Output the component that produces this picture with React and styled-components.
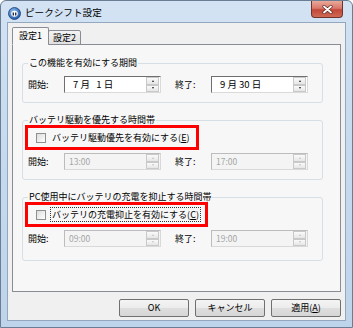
import styled, { createGlobalStyle } from "styled-components";

const GlobalStyle = createGlobalStyle`
  html, body { margin: 0; padding: 0; }
  body {
    width: 353px;
    height: 328px;
    overflow: hidden;
    font-family: "Noto Sans CJK JP", "Liberation Sans", sans-serif;
    font-size: 9px;
    color: #000;
  }
`;

const Window = styled.div`
  width: 353px;
  height: 328px;
  box-sizing: border-box;
  display: flex;
  flex-direction: column;
  border: 1px solid #6a7d92;
  border-radius: 6px 6px 0 0;
  padding: 0 6px 6px;
  background: linear-gradient(180deg, #d3e3f4 0%, #c9dcf0 30%, #bed4eb 100%);
`;

const TitleBar = styled.div`
  height: 21px;
  display: flex;
  align-items: flex-start;
`;

const TitleIcon = styled.div`
  margin: 6px 0 0 1px;
  width: 13px;
  height: 13px;
`;

const TitleText = styled.div`
  margin: 5px 0 0 4px;
  font-size: 9.6px;
  line-height: 13px;
  flex: 1;
`;

const CloseButton = styled.div`
  width: 32px;
  height: 17px;
  margin-right: 3px;
  box-sizing: border-box;
  border: 1px solid #70342c;
  border-top: none;
  border-radius: 0 0 4px 4px;
  background: linear-gradient(180deg, #e9a99b 0%, #d9786a 45%, #c2483a 55%, #cf6a55 100%);
  display: flex;
  align-items: center;
  justify-content: center;
`;

const Client = styled.div`
  flex: 1;
  display: flex;
  flex-direction: column;
  background: #f0f0f0;
  border: 1px solid #93a7bf;
  padding: 4px 4px 3px;
`;

const TabRow = styled.div`
  display: flex;
  align-items: flex-end;
  height: 18px;
  margin-bottom: -1px;
  position: relative;
  z-index: 1;
`;

const Tab = styled.div`
  box-sizing: border-box;
  height: ${(p) => (p.$active ? "18px" : "15px")};
  padding: 0 ${(p) => (p.$active ? "6px" : "4px")};
  display: flex;
  align-items: center;
  border: 1px solid #898c95;
  border-bottom: ${(p) => (p.$active ? "1px solid #f7f7f7" : "1px solid #898c95")};
  margin-left: ${(p) => (p.$active ? "0" : "-1px")};
  border-radius: 2px 2px 0 0;
  background: ${(p) => (p.$active ? "#f7f7f7" : "linear-gradient(180deg, #f3f3f3, #e0e0e0)")};
  line-height: 12px;
`;

const TabPanel = styled.div`
  flex: 1;
  display: flex;
  flex-direction: column;
  gap: 11px;
  background: #f7f7f7;
  border: 1px solid #898c95;
  padding: 12px 17px 0 9px;
`;

const Group = styled.fieldset`
  margin: 0;
  min-width: 0;
  border: 1px solid #d5dfe5;
  border-radius: 3px;
  padding: 0 2px ${(p) => p.$bottom}px;
`;

const Legend = styled.legend`
  padding: 0 1px;
  margin-left: 3px;
  line-height: 12px;
`;

const Highlight = styled.div`
  display: inline-flex;
  align-items: center;
  box-sizing: border-box;
  height: 25px;
  border: 3px solid #f00;
  padding: 0 5px 0 8px;
  gap: 5px;
  margin-top: -1px;
`;

const Check = styled.span`
  width: 10px;
  height: 10px;
  box-sizing: border-box;
  border: 1px solid #8f8f8f;
  background: linear-gradient(135deg, #dcdcdc, #ffffff);
`;

const CheckLabel = styled.span`
  line-height: 13px;
  padding: 0 1px;
  outline: ${(p) => (p.$focus ? "1px dotted #333" : "none")};
`;

const Row = styled.div`
  display: flex;
  align-items: center;
  margin-top: ${(p) => p.$top}px;
`;

const FieldLabel = styled.span`
  width: ${(p) => p.$w}px;
  padding-left: ${(p) => p.$pad}px;
  box-sizing: border-box;
  line-height: 12px;
`;

const Spin = styled.div`
  width: 97px;
  height: 17px;
  box-sizing: border-box;
  display: flex;
  border: 1px solid;
  border-color: ${(p) => (p.$disabled ? "#bcbcbc #d9d9d9 #d9d9d9 #bcbcbc" : "#6f6f6f #dadada #dadada #6f6f6f")};
  background: ${(p) => (p.$disabled ? "#f4f4f4" : "#fff")};
  color: ${(p) => (p.$disabled ? "#a5a5a5" : "#000")};
`;

const SpinText = styled.div`
  flex: 1;
  padding-left: ${(p) => p.$pad}px;
  line-height: 15px;
  white-space: pre;
  font-size: ${(p) => (p.$small ? "8.5px" : "9.5px")};
`;

const SpinButtons = styled.div`
  width: 13px;
  display: flex;
  flex-direction: column;
  margin: 0 1px 0 0;
`;

const SpinBtn = styled.div`
  flex: 1;
  box-sizing: border-box;
  border: 1px solid #c9c9c9;
  background: linear-gradient(180deg, #fafafa, #e6e6e6);
  display: flex;
  align-items: center;
  justify-content: center;
  &::after {
    content: "";
    width: 0;
    height: 0;
    border-left: 1.5px solid transparent;
    border-right: 1.5px solid transparent;
    ${(p) => (p.$down ? "border-top" : "border-bottom")}: 2px solid ${(p) => (p.$disabled ? "#c4c4c4" : "#222")};
  }
`;

const ButtonRow = styled.div`
  display: flex;
  justify-content: flex-end;
  gap: 6px;
  margin-top: 7px;
`;

const Button = styled.div`
  width: 70px;
  height: 18px;
  box-sizing: border-box;
  border: 1px solid #707070;
  border-radius: 2px;
  background: linear-gradient(180deg, #f4f4f4 0%, #ececec 48%, #dedede 52%, #d6d6d6 100%);
  display: flex;
  align-items: center;
  justify-content: center;
  line-height: 12px;
`;

const Spinner = ({ text, disabled, pad = 8, small }) => (
  <Spin $disabled={disabled}>
    <SpinText $pad={pad} $small={small}>{text}</SpinText>
    <SpinButtons>
      <SpinBtn $disabled={disabled} />
      <SpinBtn $down $disabled={disabled} />
    </SpinButtons>
  </Spin>
);

const TimeRow = ({ from, to, disabled, top }) => (
  <Row $top={top}>
    <FieldLabel $w={39} $pad={3}>開始:</FieldLabel>
    <Spinner text={from} disabled={disabled} pad={disabled ? 4 : 8} small={disabled} />
    <FieldLabel $w={50} $pad={14}>終了:</FieldLabel>
    <Spinner text={to} disabled={disabled} pad={disabled ? 4 : 8} small={disabled} />
  </Row>
);

const AppIcon = () => (
  <svg width="13" height="13" viewBox="0 0 13 13">
    <defs>
      <radialGradient id="ig" cx="40%" cy="35%" r="70%">
        <stop offset="0" stopColor="#8fc3f5" />
        <stop offset="1" stopColor="#1c4f9c" />
      </radialGradient>
    </defs>
    <circle cx="6.5" cy="6.5" r="6" fill="url(#ig)" stroke="#1b3f78" strokeWidth="0.8" />
    <ellipse cx="6.5" cy="6.8" rx="3.3" ry="3" fill="#fff" />
    <path d="M4.6 5.4h1.4v3H4.6zM7 5.4h1.4v3H7z" fill="#1e2e4a" />
  </svg>
);

export default function App() {
  return (
    <>
      <GlobalStyle />
      <Window>
        <TitleBar>
          <TitleIcon>
            <AppIcon />
          </TitleIcon>
          <TitleText>ピークシフト設定</TitleText>
          <CloseButton>
            <svg width="11" height="9" viewBox="0 0 11 9">
              <path d="M2 1.5l7 6M9 1.5l-7 6" stroke="#5a2a22" strokeWidth="3.2" strokeLinecap="round" />
              <path d="M2 1.5l7 6M9 1.5l-7 6" stroke="#fff" strokeWidth="1.8" strokeLinecap="round" />
            </svg>
          </CloseButton>
        </TitleBar>
        <Client>
          <TabRow>
            <Tab $active>設定1</Tab>
            <Tab>設定2</Tab>
          </TabRow>
          <TabPanel>
            <Group $bottom={9}>
              <Legend>この機能を有効にする期間</Legend>
              <TimeRow top={7} from={"7 月   1 日"} to={"9 月 30 日"} />
            </Group>
            <Group $bottom={9}>
              <Legend>バッテリ駆動を優先する時間帯</Legend>
              <Highlight>
                <Check />
                <CheckLabel>バッテリ駆動優先を有効にする(<u>E</u>)</CheckLabel>
              </Highlight>
              <TimeRow top={3} from="13:00" to="17:00" disabled />
            </Group>
            <Group $bottom={13}>
              <Legend>PC使用中にバッテリの充電を抑止する時間帯</Legend>
              <Highlight>
                <Check />
                <CheckLabel $focus>バッテリの充電抑止を有効にする(<u>C</u>)</CheckLabel>
              </Highlight>
              <TimeRow top={3} from="09:00" to="19:00" disabled />
            </Group>
          </TabPanel>
          <ButtonRow>
            <Button>OK</Button>
            <Button>キャンセル</Button>
            <Button>適用(<u>A</u>)</Button>
          </ButtonRow>
        </Client>
      </Window>
    </>
  );
}
